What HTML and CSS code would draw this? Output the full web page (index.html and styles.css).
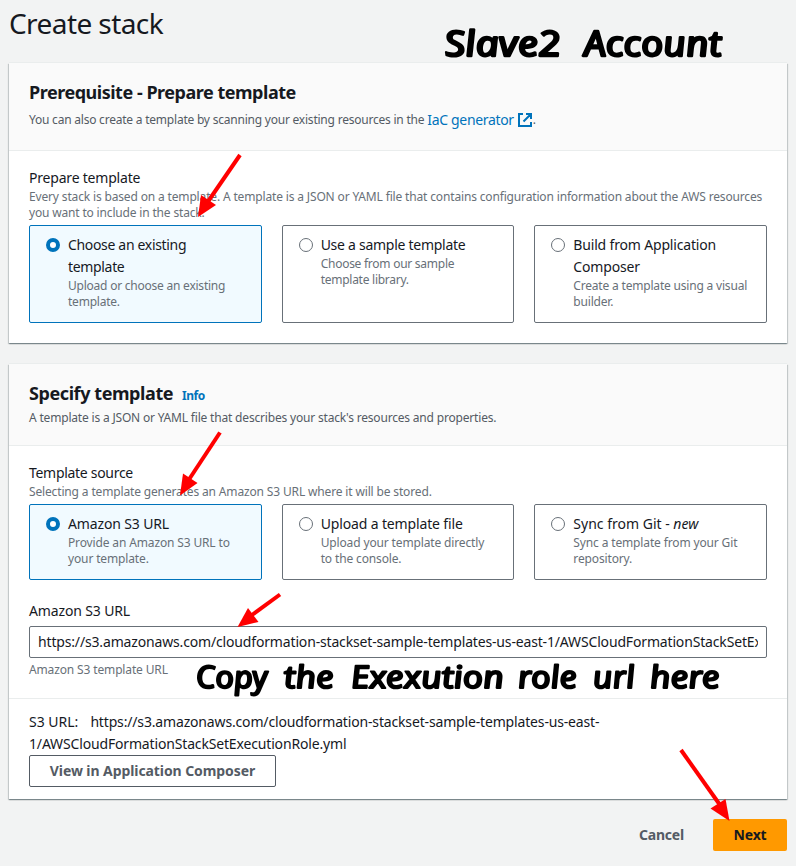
FILE: index.html
```html
<!DOCTYPE html>
<html lang="en">
<head>
<meta charset="utf-8">
<title>Create stack</title>
<link rel="stylesheet" href="styles.css">
</head>
<body>
<main class="page">
  <h1 class="page-title"><span class="t-title">Create stack</span></h1>

  <section class="panel">
    <header class="panel-header first">
      <h2><span class="t-pre">Prerequisite - Prepare template</span></h2>
      <p class="with-link"><span class="t-scan">You can also create a template by scanning your existing resources in the</span> <a class="link t-iac">IaC generator</a><svg class="external" viewBox="0 0 14 14"><path d="M5 1H1v12h12V9M8 1h5v5M13 1L5.5 8.5"/></svg>.</p>
    </header>
    <div class="panel-body">
      <div class="label"><span class="t-prep">Prepare template</span></div>
      <p class="hint"><span class="t-every">Every stack is based on a template. A template is a JSON or YAML file that contains configuration information about the AWS resources</span><br><span class="t-want">you want to include in the stack.</span></p>
      <div class="tiles">
        <div class="tile selected">
          <i class="radio"></i>
          <div><div class="label"><span class="t-choose">Choose an existing</span><br><span class="t-choose">template</span></div><p class="hint"><span class="t-upl">Upload or choose an existing</span><br><span class="t-upl">template.</span></p></div>
        </div>
        <div class="tile">
          <i class="radio"></i>
          <div><div class="label"><span class="t-use">Use a sample template</span></div><p class="hint"><span class="t-from">Choose from our sample</span><br><span class="t-from">template library.</span></p></div>
        </div>
        <div class="tile">
          <i class="radio"></i>
          <div><div class="label"><span class="t-build">Build from Application</span><br><span class="t-build">Composer</span></div><p class="hint"><span class="t-create">Create a template using a visual</span><br><span class="t-create">builder.</span></p></div>
        </div>
      </div>
    </div>
  </section>

  <section class="panel second">
    <header class="panel-header">
      <h2><span class="t-spec">Specify template</span><a class="info">Info</a></h2>
      <p><span class="t-desc">A template is a JSON or YAML file that describes your stack's resources and properties.</span></p>
    </header>
    <div class="panel-body source">
      <div class="label"><span class="t-source">Template source</span></div>
      <p class="hint"><span class="t-sel">Selecting a template generates an Amazon S3 URL where it will be stored.</span></p>
      <div class="tiles">
        <div class="tile selected">
          <i class="radio"></i>
          <div><div class="label"><span class="t-s3">Amazon S3 URL</span></div><p class="hint"><span class="t-prov">Provide an Amazon S3 URL to</span><br><span class="t-prov">your template.</span></p></div>
        </div>
        <div class="tile">
          <i class="radio"></i>
          <div><div class="label"><span class="t-upf">Upload a template file</span></div><p class="hint"><span class="t-dir">Upload your template directly</span><br><span class="t-dir">to the console.</span></p></div>
        </div>
        <div class="tile">
          <i class="radio"></i>
          <div><div class="label"><span class="t-sync">Sync from Git - <em>new</em></span></div><p class="hint"><span class="t-git">Sync a template from your Git</span><br><span class="t-git">repository.</span></p></div>
        </div>
      </div>
      <div class="label field-label"><span class="t-s3">Amazon S3 URL</span></div>
      <div class="input"><div class="value"><span class="t-url">https://s3.amazonaws.com/cloudformation-stackset-sample-templates-us-east-1/AWSCloudFormationStackSetExecutionRole.yml</span></div></div>
      <p class="hint field-hint"><span class="t-s3h">Amazon S3 template URL</span></p>
    </div>
    <footer class="panel-footer">
      <div class="label"><span class="s3-key">S3 URL:</span><span class="t-url">https://s3.amazonaws.com/cloudformation-stackset-sample-templates-us-east-</span><br><span class="t-url">1/AWSCloudFormationStackSetExecutionRole.yml</span></div>
      <button class="button"><span class="t-view">View in Application Composer</span></button>
    </footer>
  </section>

  <div class="actions">
    <button class="cancel">Cancel</button>
    <button class="next">Next</button>
  </div>
</main>

<svg class="annotations" viewBox="0 0 796 866">
  <g class="arrow">
    <path d="M240 155L207 203"/><polygon points="198,217 201,195 216,205"/>
    <path d="M220 432.500L188 481"/><polygon points="180,495.500 183,473.500 197.500,483"/>
    <path d="M280 594.500L252 615"/><polygon points="237.500,627 248,608 258.500,622"/>
    <path d="M681 750L720 805"/><polygon points="729.500,821 710.500,808.500 725.500,799"/>
  </g>
  <g class="note big">
    <text transform="translate(446 56) skewX(8)" textLength="116" lengthAdjust="spacingAndGlyphs">Slave2</text>
    <text transform="translate(585 56) skewX(8)" textLength="138" lengthAdjust="spacingAndGlyphs">Account</text>
  </g>
  <g class="note small">
    <text transform="translate(197 688) skewX(8)" textLength="72" lengthAdjust="spacingAndGlyphs">Copy</text>
    <text transform="translate(285 688) skewX(8)" textLength="50" lengthAdjust="spacingAndGlyphs">the</text>
    <text transform="translate(352 688) skewX(8)" textLength="153" lengthAdjust="spacingAndGlyphs">Exexution</text>
    <text transform="translate(519 688) skewX(8)" textLength="59" lengthAdjust="spacingAndGlyphs">role</text>
    <text transform="translate(594 688) skewX(8)" textLength="42" lengthAdjust="spacingAndGlyphs">url</text>
    <text transform="translate(651 688) skewX(8)" textLength="70" lengthAdjust="spacingAndGlyphs">here</text>
  </g>
</svg>
</body>
</html>
```
FILE: styles.css
```css
* { box-sizing: border-box; }
body { margin: 0; background: #f2f3f3; color: #16191f; font: 14px/22px "Noto Sans", sans-serif; }
h1, h2, p { margin: 0; }
span, a { white-space: nowrap; }
.page { width: 796px; height: 866px; padding: 5px 9px 0; overflow: hidden; }
.page-title { font-size: 28px; font-weight: 400; line-height: 36px; margin-bottom: 22px; }
.panel { width: 778px; height: 280px; background: #fff; box-shadow: 0 1px 1px 0 rgba(0, 28, 36, .3), 1px 1px 1px 0 rgba(0, 28, 36, .15), -1px 1px 1px 0 rgba(0, 28, 36, .15), 0 -1px 0 0 #eaeded; }
.panel.second { height: 435px; margin-top: 21px; }
.panel-header { height: 82px; padding: 18px 20px 0; background: #fafafa; border-bottom: 1px solid #eaeded; }
.panel-header.first { height: 88px; }
h2 { font-size: 18px; font-weight: 700; line-height: 22px; }
.panel-header p { font-size: 12px; line-height: 16px; color: #545b64; margin-top: 3px; }
.panel-header .with-link { display: flex; align-items: center; height: 22px; margin-top: 6px; }
.link { font-size: 14px; color: #0073bb; margin-left: 3px; }
.external { width: 14px; height: 14px; margin-left: 4px; margin-right: 1px; fill: none; stroke: #0073bb; stroke-width: 2; }
.info { font-size: 12px; color: #0073bb; margin-left: 9px; letter-spacing: -.5px; }
.panel-body { padding: 16px 20px 0; }
.hint { font-size: 12px; line-height: 16px; color: #687078; }
.tiles { display: grid; grid-template-columns: repeat(3, minmax(0, 1fr)); gap: 20px; margin-top: 4px; }
.tile { display: flex; gap: 8px; min-height: 76px; padding: 8px 16px 12px; border: 1px solid #687078; border-radius: 2px; }
.tile.selected { border-color: #0073bb; background: #f1faff; }
.radio { flex: none; width: 14px; height: 14px; margin-top: 4px; border: 1px solid #687078; border-radius: 50%; background: #fff; }
.selected .radio { border: 4px solid #0073bb; }
.field-label { margin-top: 20px; }
.input { height: 32px; margin-top: 4px; padding: 4px 8px; border: 1px solid #687078; border-radius: 2px; }
.value { overflow: hidden; }
.field-hint { margin-top: 4px; }
.panel-footer { margin-top: 20px; padding: 12px 20px 0; border-top: 1px solid #eaeded; }
.s3-key { margin-right: 12px; }
button { display: block; height: 32px; padding: 0; border: 1px solid #545b64; border-radius: 2px; background: #fff; color: #545b64; font: 700 14px/22px "Noto Sans", sans-serif; }
.button { width: 247px; }
.actions { display: flex; justify-content: flex-end; margin-top: 20px; }
.cancel { border: 0; background: none; margin-right: 29px; letter-spacing: -.2px; }
.next { width: 74px; border: 0; background: #ff9900; color: #16191f; letter-spacing: -.2px; }

/* Tracking */
.t-title { letter-spacing: -.58px; }
.t-pre { letter-spacing: -.48px; }
.t-spec { letter-spacing: -.42px; }
.t-scan { letter-spacing: -.22px; }
.t-iac { letter-spacing: -.33px; }
.t-desc { letter-spacing: -.185px; }
.t-prep { letter-spacing: -.2px; }
.t-source { letter-spacing: -.3px; }
.t-every { letter-spacing: -.155px; }
.t-want { letter-spacing: -.17px; }
.t-sel { letter-spacing: -.15px; }
.t-choose { letter-spacing: -.33px; }
.t-use { letter-spacing: -.27px; }
.t-build { letter-spacing: -.17px; }
.t-upl { letter-spacing: -.23px; }
.t-from { letter-spacing: -.26px; }
.t-create { letter-spacing: -.19px; }
.t-s3, .t-upf { letter-spacing: -.14px; }
.t-prov, .t-dir, .t-git, .t-s3h { letter-spacing: -.14px; }
.t-url { letter-spacing: -.16px; }
.t-view { letter-spacing: -.08px; }

/* Callouts drawn over the page */
.annotations { position: absolute; left: 0; top: 0; width: 796px; height: 866px; }
.arrow path { stroke: #f00; stroke-width: 4; }
.arrow polygon { fill: #f00; }
.note { font-family: "Noto Sans", sans-serif; font-style: italic; font-weight: 400; stroke: #000; stroke-linejoin: round; filter: drop-shadow(0 0 1px #fff); }
.big { font-size: 35px; stroke-width: 2.3; }
.small { font-size: 31px; stroke-width: 2; }
```
